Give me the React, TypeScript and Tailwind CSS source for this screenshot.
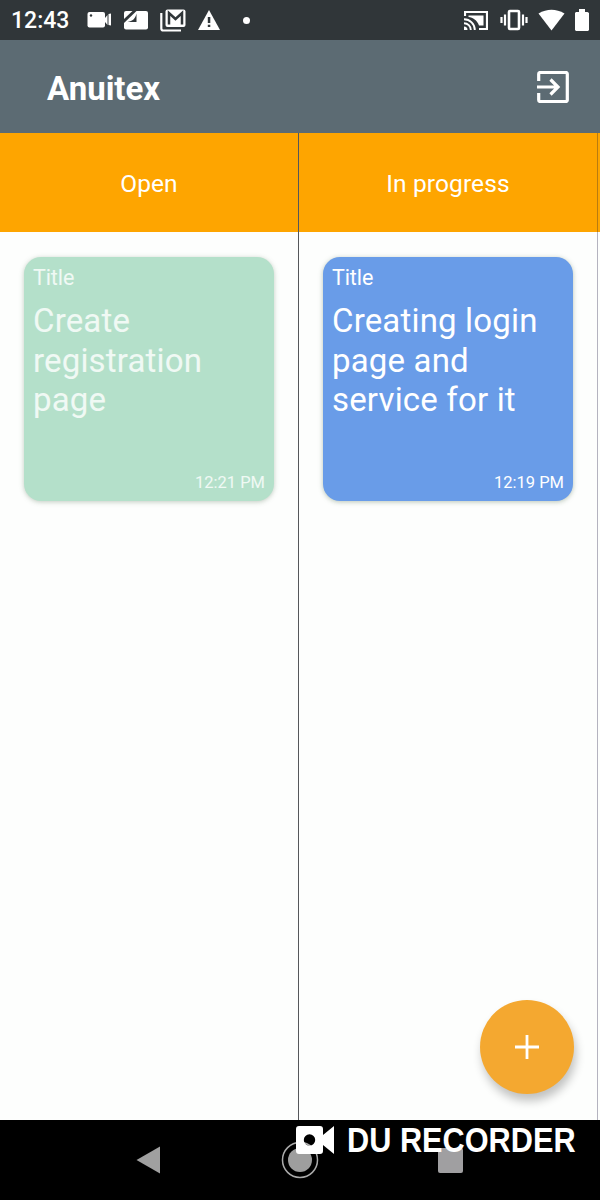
import type { ReactNode } from "react";

function StatusBar() {
  return (
    <div className="flex h-10 shrink-0 items-center bg-[#303639] text-white">
      <span className="ml-[11px] w-[58px] whitespace-nowrap pt-[2px] text-[23px] font-medium leading-10">12:43</span>
      <svg className="ml-[18px] h-6 w-6" viewBox="0 0 24 24" fill="#fff">
        <rect x="0.5" y="4" width="17.5" height="15.5" rx="2" />
        <path d="M18 10l2.5-3v10L18 14zM21.5 6l2.500-.5v12l-2.500-.5z" />
        <circle cx="4" cy="7.500" r="1.200" fill="#303639" />
      </svg>
      <svg className="ml-[13px] h-6 w-6" viewBox="0 0 24 24">
        <path d="M12.500 3H22a2 2 0 0 1 2 2v14.500a2 2 0 0 1-2 2H2a2 2 0 0 1-2-2V15z" fill="#fff" />
        <path d="M0 11V5a2 2 0 0 1 2-2h6.500z" fill="#fff" />
        <path d="M12.500 5.500V14H3.500C9 13 11 11 12.500 5.500z" fill="#303639" />
      </svg>
      <svg className="ml-3 h-6 w-[26px]" viewBox="0 0 26 24" fill="none">
        <path d="M1.300 5v15.500a2 2 0 0 0 2 2H21" stroke="#fff" strokeWidth="2.2" />
        <rect x="5.500" y="1.500" width="20" height="17.500" rx="2" fill="#fff" />
        <path d="M9 16.500V5l6.500 6L22 5v11.500" stroke="#303639" strokeWidth="2.500" />
      </svg>
      <svg className="ml-3 h-6 w-[22px]" viewBox="0 0 22 24">
        <path d="M11 2L22 22H0z" fill="#fff" />
        <path d="M9.800 9h2.500v6H9.800zM9.800 16.800h2.500V19H9.800z" fill="#303639" />
      </svg>
      <span className="ml-[23px] h-[7px] w-[7px] rounded-full bg-white" />
      <div className="ml-auto mr-[11px] flex items-center">
        <svg className="h-6 w-6" viewBox="0 0 24 24" fill="none" stroke="#fff">
          <path d="M1 8V4h22v17h-8" strokeWidth="2.200" />
          <path d="M4.500 7.500h15v10H15C13 12 9 9.500 4.500 9z" fill="#fff" stroke="none" />
          <path d="M0 11.200a10.800 10.800 0 0 1 10.800 10.800M0 15.200A6.800 6.800 0 0 1 6.800 22" strokeWidth="1.900" />
          <path d="M0 18.500A3.500 3.500 0 0 1 3.500 22H0z" fill="#fff" stroke="none" />
        </svg>
        <svg className="ml-3 h-6 w-7" viewBox="0 0 28 24" fill="none" stroke="#fff" strokeWidth="2.200">
          <rect x="9" y="3" width="10" height="18" rx="1" strokeWidth="2.600" />
          <path d="M1.500 9v6M5 6.500v11M23 6.500v11M26.500 9v6" />
        </svg>
        <svg className="ml-[10px] h-6 w-[27px]" viewBox="0 0 27 24" fill="#fff">
          <path d="M0.500 5.500Q13.500-2 26.500 5.500L13.500 22.500z" />
        </svg>
        <svg className="ml-[10px] h-6 w-[14px]" viewBox="0 0 14 24" fill="#fff">
          <path d="M4 1h6v3h2.500L14 5v17l-1 1H1l-1-1V5l1-1h3z" />
        </svg>
      </div>
    </div>
  );
}

function Column({ title, children }: { title: string; children?: ReactNode }) {
  return (
    <section className="flex min-w-0 flex-col">
      <h2 className="flex h-[99px] items-center justify-center bg-[#fea500] pt-[3px] text-[24.500px] tracking-[0.1px] text-white">
        {title}
      </h2>
      <div className="pl-6 pr-6 pt-[25px]">{children}</div>
    </section>
  );
}

function Card({ text, time, className }: { text: ReactNode; time: string; className: string }) {
  return (
    <article className={"flex h-[244px] w-full flex-col rounded-[17px] pl-[9px] pr-[9px] pt-[8px] " + className}>
      <span className="text-[21.500px] leading-[26px] tracking-[-0.1px]">Title</span>
      <p className="mt-[10px] whitespace-nowrap text-[33px] leading-[39.500px] tracking-[0.170px]">{text}</p>
      <time className="mb-[8px] mt-auto self-end text-[16.500px] leading-5">{time}</time>
    </article>
  );
}

export default function App() {
  return (
    <div className="relative flex h-[1200px] w-[600px] flex-col overflow-hidden bg-[#fdfefd] font-['Roboto',sans-serif]">
      <StatusBar />
      <header className="flex h-[93px] shrink-0 items-center justify-between bg-[#5c6b73] pl-[47px] pr-[31px] text-white">
        <h1 className="pt-[4px] text-[33px] font-bold leading-10">Anuitex</h1>
        <svg className="h-8 w-8" viewBox="0 0 32 32" fill="none" stroke="#fff" strokeWidth="3.200">
          <path d="M1.700 10V3A1.500 1.500 0 0 1 3.200 1.500h25.600A1.500 1.500 0 0 1 30.300 3v26a1.500 1.500 0 0 1-1.500 1.500H3.200A1.500 1.500 0 0 1 1.700 29v-7M0 16h21M13.500 8.500l7.500 7.500-7.500 7.500" />
        </svg>
      </header>
      <main className="grid min-h-0 flex-1 grid-cols-[298px_1px_298px_1px_2px]">
        <Column title="Open">
          <Card
            text={<>Create<br />registration<br />page</>}
            time="12:21 PM"
            className="bg-[#b4e0ca] text-white/80 shadow-[0_1px_5px_rgba(80,110,80,0.35)]"
          />
        </Column>
        <div className="bg-[#55575b]" />
        <Column title="In progress">
          <Card
            text={<>Creating login<br />page and<br />service for it</>}
            time="12:19 PM"
            className="bg-[#699ce8] text-white shadow-[0_1px_5px_rgba(80,110,80,0.4)]"
          />
        </Column>
        <div className="bg-[#b4b3bf]"><div className="h-[99px] bg-[#b97c10]" /></div>
        <div><div className="h-[99px] bg-[#fea500]" /></div>
      </main>
      <button aria-label="Add" className="absolute left-[480px] top-[1000px] flex h-[94px] w-[94px] items-center justify-center rounded-full bg-[#f4a830] shadow-[2px_7px_10px_rgba(0,0,0,0.24)]">
        <svg className="h-6 w-6" viewBox="0 0 24 24" stroke="#fff" strokeWidth="2.800">
          <path d="M12 0v24M0 12h24" />
        </svg>
      </button>
      <nav className="flex h-20 shrink-0 items-center bg-black">
        <svg className="ml-[136px] h-7 w-6" viewBox="0 0 24 28">
          <path d="M0.500 14L24 0.500v27z" fill="#a0a0a0" />
        </svg>
        <svg className="ml-[121px] h-[38px] w-[38px]" viewBox="0 0 38 38">
          <circle cx="19" cy="19" r="17.500" fill="none" stroke="#aaa" strokeWidth="1.500" />
          <circle cx="19" cy="19" r="12" fill="#9e9e9e" />
        </svg>
        <span className="ml-[119px] h-[25px] w-[25px] rounded-[2px] bg-[#a09fa1]" />
      </nav>
      <div className="absolute left-[296px] top-[1124px] flex h-8 items-center text-white">
        <svg className="h-7 w-[38px]" viewBox="0 0 38 28">
          <path fillRule="evenodd" d="M3 0h21a3 3 0 0 1 3 3v6L38 0v28L27 19v6a3 3 0 0 1-3 3H3a3 3 0 0 1-3-3V3a3 3 0 0 1 3-3zM13.500 8.300a5.700 5.700 0 1 0 0 11.400 5.700 5.700 0 0 0 0-11.400z" fill="#fff" />
        </svg>
        <span className="ml-[13px] origin-left scale-x-[0.890] whitespace-nowrap font-['Liberation_Sans',sans-serif] text-[34.500px] font-bold leading-8">DU RECORDER</span>
      </div>
    </div>
  );
}
